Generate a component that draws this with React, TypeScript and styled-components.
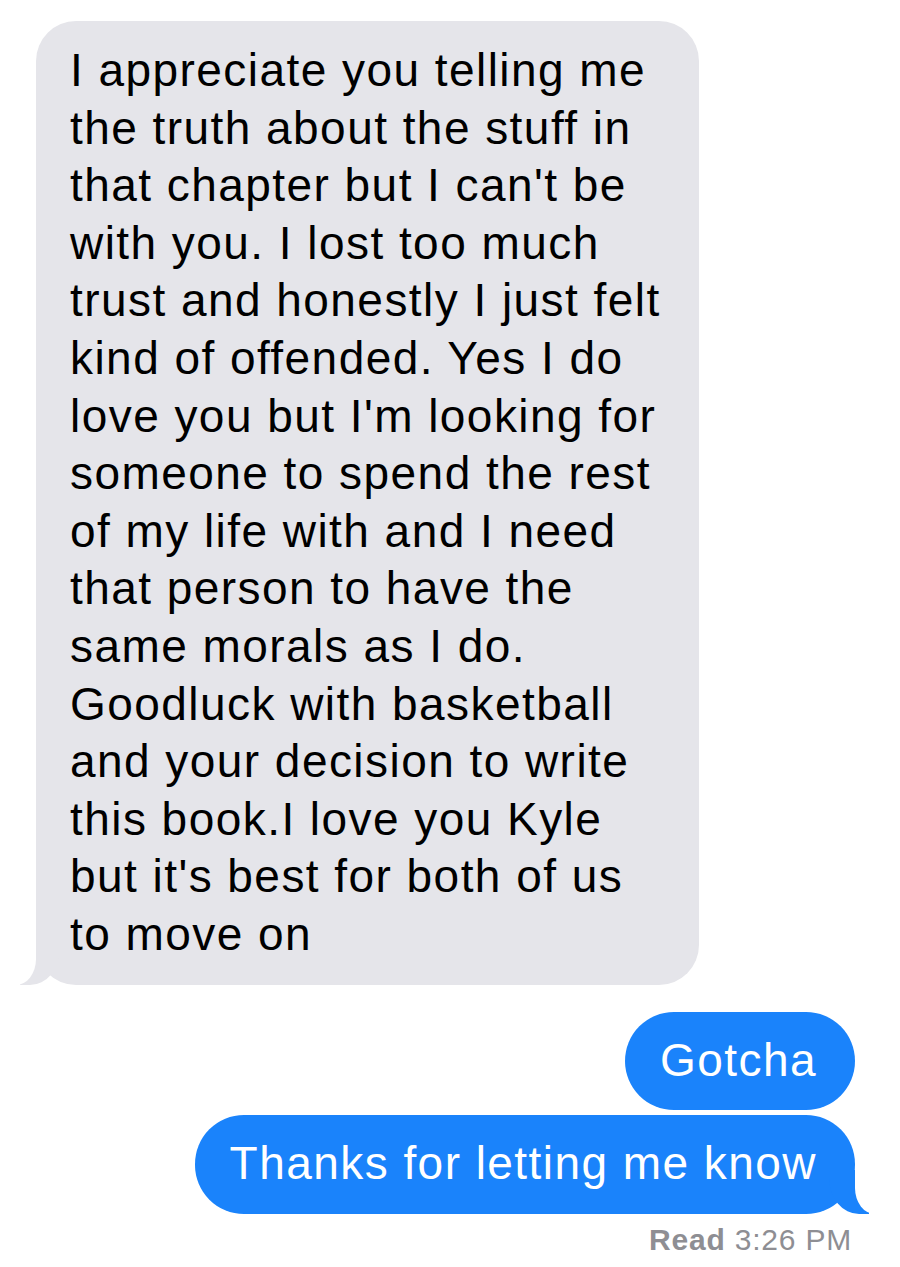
import React from 'react';
import styled, { createGlobalStyle } from 'styled-components';

const GlobalStyle = createGlobalStyle`
  body {
    margin: 0;
    background: #ffffff;
    font-family: 'Liberation Sans', Arial, sans-serif;
  }
`;

const Thread = styled.div`
  display: flex;
  flex-direction: column;
  padding: 21px 45px 0 36px;
`;

const Row = styled.div<{ $mine?: boolean; $gap?: number }>`
  display: flex;
  justify-content: ${(p) => (p.$mine ? 'flex-end' : 'flex-start')};
  margin-top: ${(p) => p.$gap ?? 0}px;
`;

const Bubble = styled.div<{ $mine?: boolean; $tail?: boolean }>`
  position: relative;
  box-sizing: border-box;
  padding: ${(p) => (p.$mine ? '20px 38px 21px 35px' : '21px 38px 21px 34px')};
  border-radius: ${(p) => (p.$mine ? '49px' : '40px')};
  background: ${(p) => (p.$mine ? '#1a83fb' : '#e5e5ea')};
  color: ${(p) => (p.$mine ? '#ffffff' : '#000000')};
  font-size: 46px;
  letter-spacing: 1.45px;
  line-height: 57.6px;
  white-space: pre;

  ${(p) =>
    p.$tail &&
    (p.$mine
      ? `
    &::before {
      content: '';
      position: absolute;
      bottom: 0;
      right: -14px;
      width: 40px;
      height: 44px;
      background: #1a83fb;
      border-bottom-left-radius: 30px 36px;
    }
    &::after {
      content: '';
      position: absolute;
      bottom: 0;
      right: -30px;
      width: 30px;
      height: 46px;
      background: #ffffff;
      border-bottom-left-radius: 20px 26px;
    }
  `
      : `
    &::before {
      content: '';
      position: absolute;
      bottom: 0;
      left: -16px;
      width: 40px;
      height: 44px;
      background: #e5e5ea;
      border-bottom-right-radius: 30px 36px;
    }
    &::after {
      content: '';
      position: absolute;
      bottom: 0;
      left: -30px;
      width: 30px;
      height: 46px;
      background: #ffffff;
      border-bottom-right-radius: 20px 26px;
    }
  `)}
`;

const Receipt = styled.div`
  align-self: flex-end;
  margin-top: 10px;
  margin-right: 3px;
  color: #8e8e93;
  font-size: 30px;
  letter-spacing: 0.8px;
  line-height: 32px;

  b {
    font-weight: 700;
  }
`;

const incoming = `I appreciate you telling me
the truth about the stuff in
that chapter but I can't be
with you. I lost too much
trust and honestly I just felt
kind of offended. Yes I do
love you but I'm looking for
someone to spend the rest
of my life with and I need
that person to have the
same morals as I do.
Goodluck with basketball
and your decision to write
this book.I love you Kyle
but it's best for both of us
to move on`;

export default function App() {
  return (
    <>
      <GlobalStyle />
      <Thread>
        <Row>
          <Bubble $tail>{incoming}</Bubble>
        </Row>
        <Row $mine $gap={27}>
          <Bubble $mine>Gotcha</Bubble>
        </Row>
        <Row $mine $gap={5}>
          <Bubble $mine $tail>
            Thanks for letting me know
          </Bubble>
        </Row>
        <Receipt>
          <b>Read</b> 3:26 PM
        </Receipt>
      </Thread>
    </>
  );
}
